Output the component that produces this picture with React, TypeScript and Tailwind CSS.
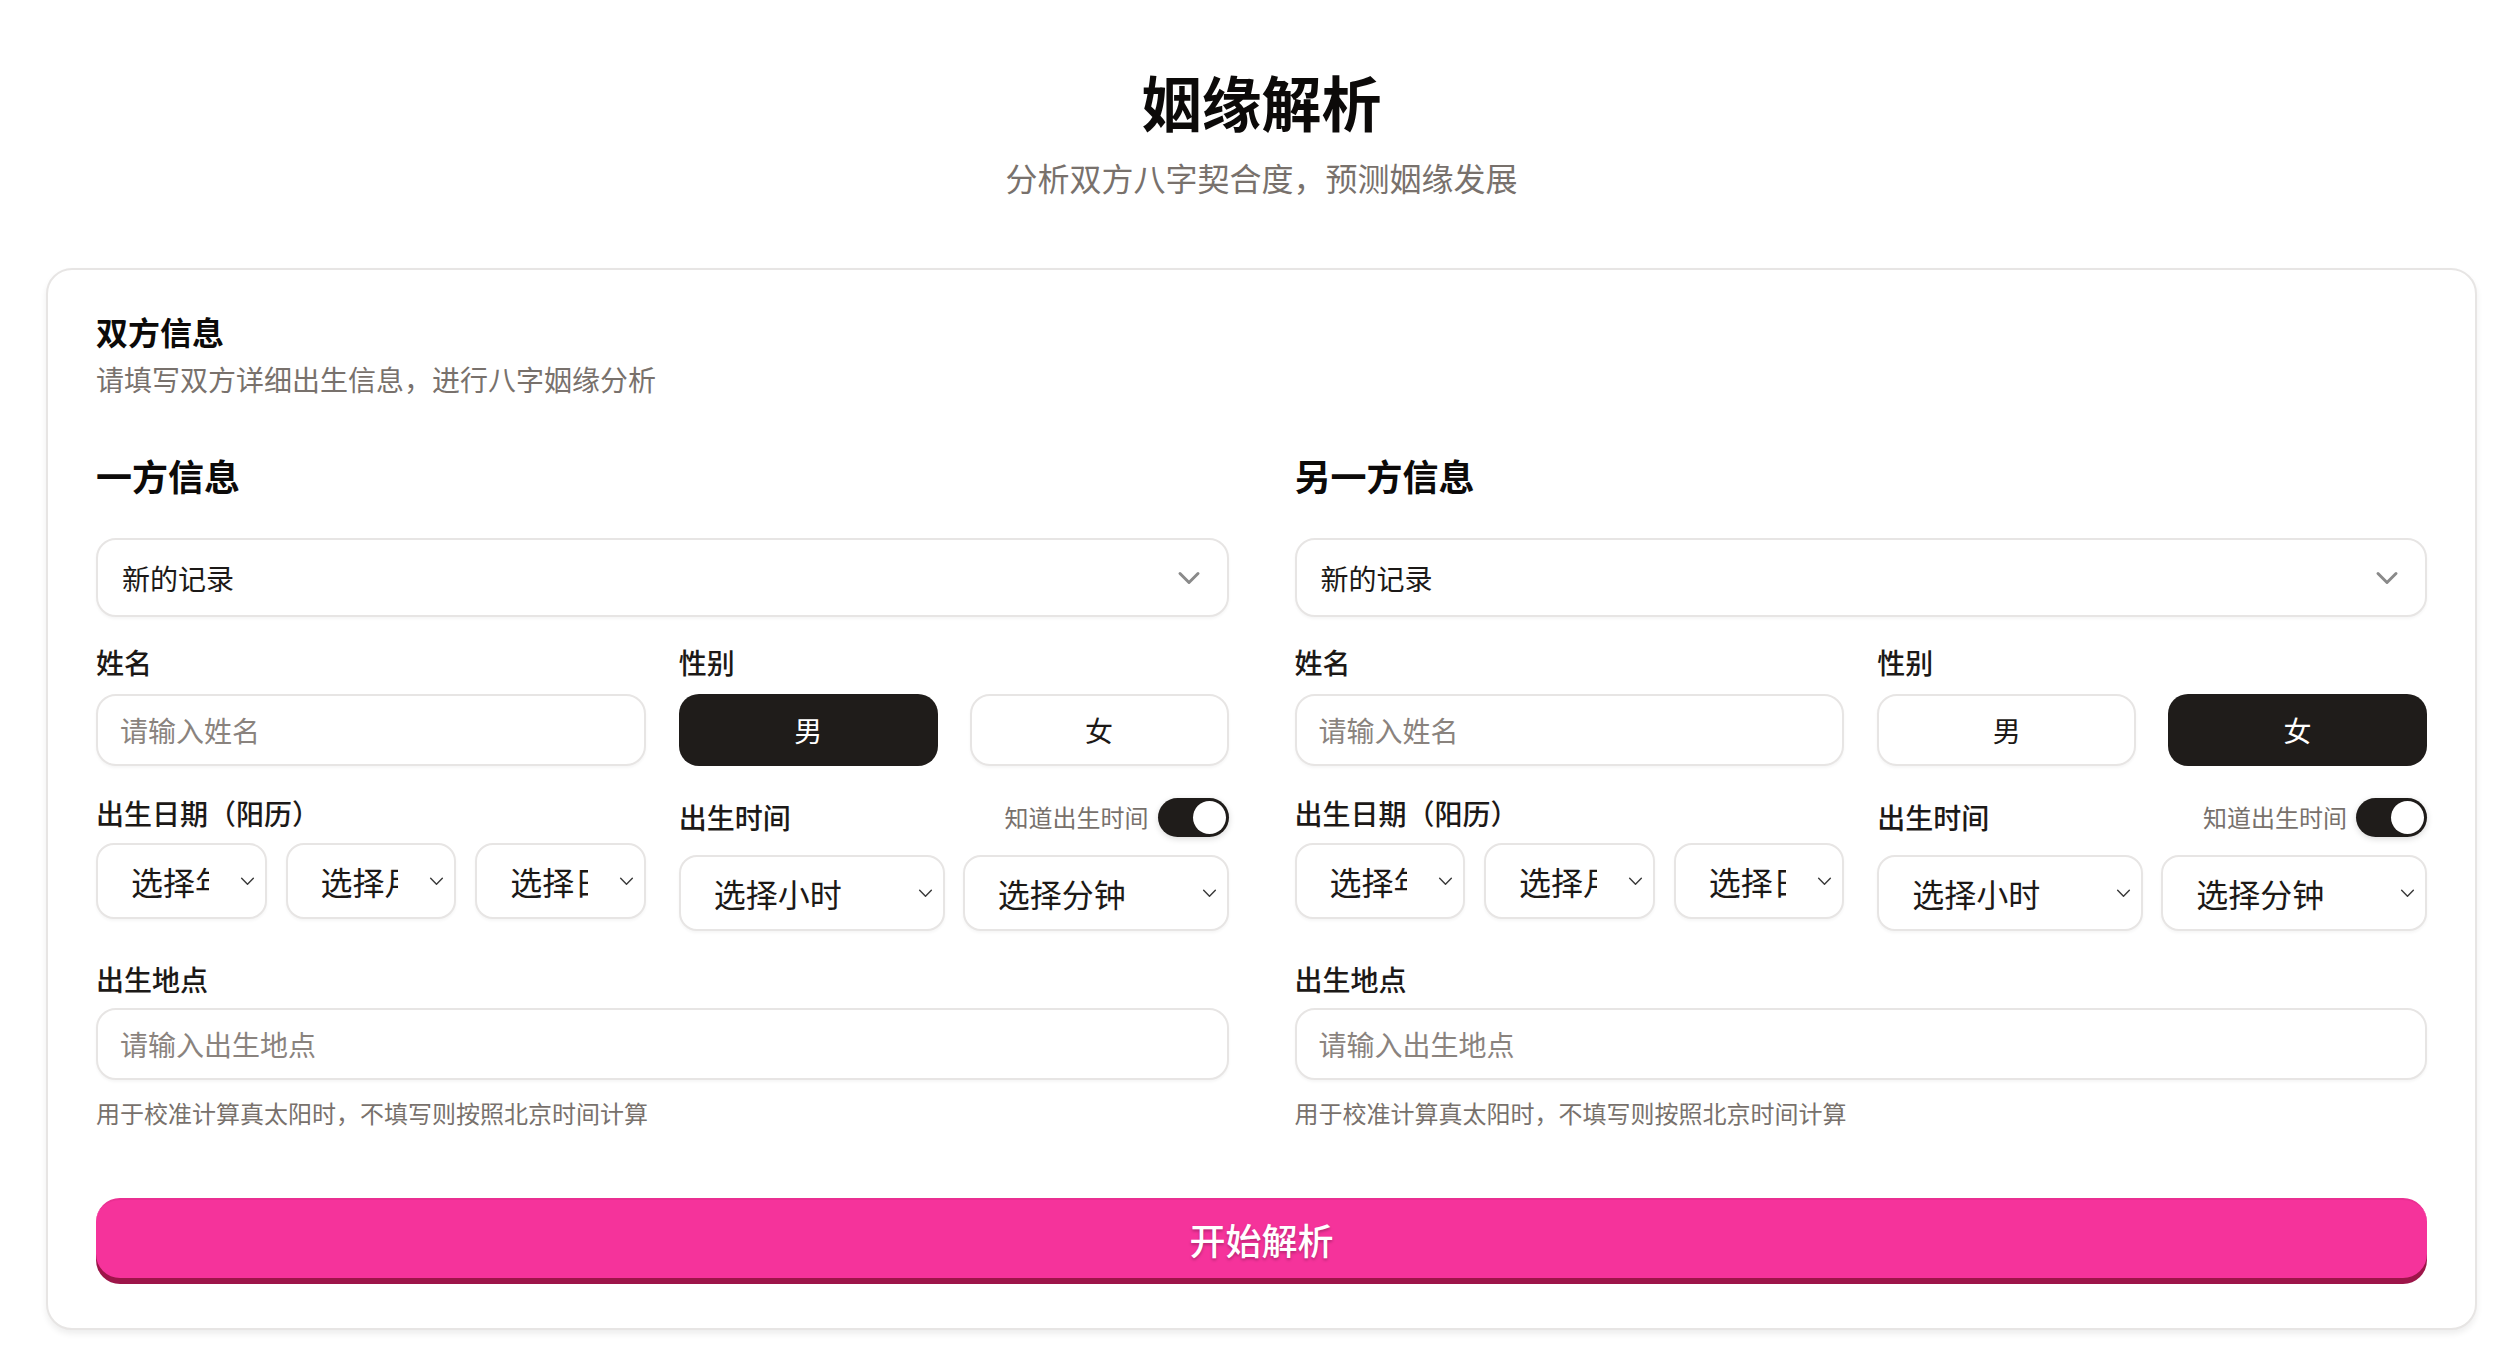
import { ChevronDown } from "lucide-react";

const font = "font-['Noto_Sans_CJK_SC','Noto_Sans',sans-serif]";

function SmallChevron() {
  return (
    <svg viewBox="0 0 16 10" className="h-[9px] w-[15px] shrink-0" fill="none">
      <path d="M1.5 1.5 8 8l6.5-6.5" stroke="#3a3a3a" strokeWidth="1.6" strokeLinecap="round" strokeLinejoin="round" />
    </svg>
  );
}

function PickSelect({ label, tight }: { label: string; tight?: boolean }) {
  return (
    <div className="flex h-[76px] items-center rounded-[18px] border-2 border-[#e7e5e4] bg-white pl-[33px] pr-[10px] shadow-[0_2px_3px_rgba(0,0,0,0.04)]">
      <span
        className={`min-w-0 flex-1 overflow-hidden whitespace-nowrap text-[32px] leading-[40px] text-[#1c1917] ${
          tight ? "mr-[31px]" : "mr-[12px]"
        }`}
      >
        {label}
      </span>
      <SmallChevron />
    </div>
  );
}

function TextField({ placeholder }: { placeholder: string }) {
  return (
    <div className="flex h-[72px] items-center rounded-[20px] border-2 border-[#e7e5e4] bg-white px-[22px] shadow-[0_2px_3px_rgba(0,0,0,0.04)]">
      <span className="text-[28px] leading-[36px] text-[#8a837e]">{placeholder}</span>
    </div>
  );
}

function GenderButton({ label, active }: { label: string; active: boolean }) {
  return (
    <button
      className={
        active
          ? "flex h-[72px] items-center justify-center rounded-[20px] bg-[#1f1c1a] text-[28px] text-white"
          : "flex h-[72px] items-center justify-center rounded-[20px] border-2 border-[#e7e5e4] bg-white text-[28px] text-[#1c1917] shadow-[0_2px_3px_rgba(0,0,0,0.04)]"
      }
    >
      {label}
    </button>
  );
}

function Label({ children }: { children: React.ReactNode }) {
  return <div className="text-[28px] font-medium leading-[40px] text-[#1c1917]">{children}</div>;
}

function PersonColumn({ title, gender }: { title: string; gender: "male" | "female" }) {
  return (
    <div className="flex flex-col">
      <h3 className="text-[36px] font-semibold leading-[48px] text-[#0c0a09]">{title}</h3>

      {/* saved record picker */}
      <div className="mt-[39px] flex h-[79px] items-center justify-between rounded-[20px] border-2 border-[#e7e5e4] bg-white pl-[24px] pr-[20px] shadow-[0_2px_3px_rgba(0,0,0,0.04)]">
        <span className="text-[28px] leading-[36px] text-[#1c1917]">新的记录</span>
        <ChevronDown size={36} strokeWidth={2} className="text-[#8a8a8a]" />
      </div>

      <div className="mt-[25px] grid grid-cols-2 gap-x-[33px]">
        <div className="flex flex-col">
          <Label>姓名</Label>
          <div className="mt-[12px]">
            <TextField placeholder="请输入姓名" />
          </div>
        </div>
        <div className="flex flex-col">
          <Label>性别</Label>
          <div className="mt-[12px] grid grid-cols-2 gap-x-[32px]">
            <GenderButton label="男" active={gender === "male"} />
            <GenderButton label="女" active={gender === "female"} />
          </div>
        </div>
      </div>

      <div className="mt-[27px] grid grid-cols-2 gap-x-[33px]">
        <div className="flex flex-col">
          <Label>出生日期（阳历）</Label>
          <div className="mt-[10px] grid grid-cols-3 gap-x-[19px]">
            <PickSelect label="选择年" tight />
            <PickSelect label="选择月" tight />
            <PickSelect label="选择日" tight />
          </div>
        </div>
        <div className="flex flex-col">
          <div className="flex h-[48px] items-center justify-between">
            <Label>出生时间</Label>
            <div className="flex items-center gap-[9px]">
              <span className="text-[24px] leading-[32px] text-[#78716c]">知道出生时间</span>
              <button className="flex h-[39px] w-[71px] items-center justify-end rounded-full bg-[#1f1c1a] px-[3px] shadow-[0_2px_6px_rgba(0,0,0,0.15)]">
                <span className="h-[33px] w-[33px] rounded-full bg-white" />
              </button>
            </div>
          </div>
          <div className="mt-[14px] grid grid-cols-2 gap-x-[18px]">
            <PickSelect label="选择小时" />
            <PickSelect label="选择分钟" />
          </div>
        </div>
      </div>

      <div className="mt-[28px]">
        <Label>出生地点</Label>
      </div>
      <div className="mt-[9px]">
        <TextField placeholder="请输入出生地点" />
      </div>
      <p className="mt-[17px] text-[24px] leading-[32px] text-[#78716c]">
        用于校准计算真太阳时，不填写则按照北京时间计算
      </p>
    </div>
  );
}

export default function App() {
  return (
    <div className={`bg-white pl-[46px] pr-[37px] pt-[65px] pb-[10px] ${font}`}>
      <header className="flex flex-col items-center">
        <h1 className="text-[60px] font-bold leading-[72px] text-[#0c0a09]">姻缘解析</h1>
        <p className="mt-[20px] text-[32px] leading-[40px] text-[#78716c]">分析双方八字契合度，预测姻缘发展</p>
      </header>

      <section className="mt-[71px] rounded-[26px] border-2 border-[#e7e5e4] bg-white px-[48px] pt-[41px] pb-[50px] shadow-[0_4px_6px_rgba(0,0,0,0.07)]">
        <h2 className="text-[32px] font-semibold leading-[40px] text-[#0c0a09]">双方信息</h2>
        <p className="mt-[8px] text-[28px] leading-[40px] text-[#78716c]">请填写双方详细出生信息，进行八字姻缘分析</p>

        <div className="mt-[52px] grid grid-cols-2 gap-x-[66px]">
          <PersonColumn title="一方信息" gender="male" />
          <PersonColumn title="另一方信息" gender="female" />
        </div>

        <button className="mt-[69px] flex h-[80px] w-full items-center justify-center rounded-[24px] border-t-2 border-[#ea2f92] bg-[#f5339b] shadow-[0_6px_0_#9d1549] text-[36px] font-medium text-white [text-shadow:0_2px_3px_rgba(0,0,0,0.25)]">
          开始解析
        </button>
      </section>
    </div>
  );
}
